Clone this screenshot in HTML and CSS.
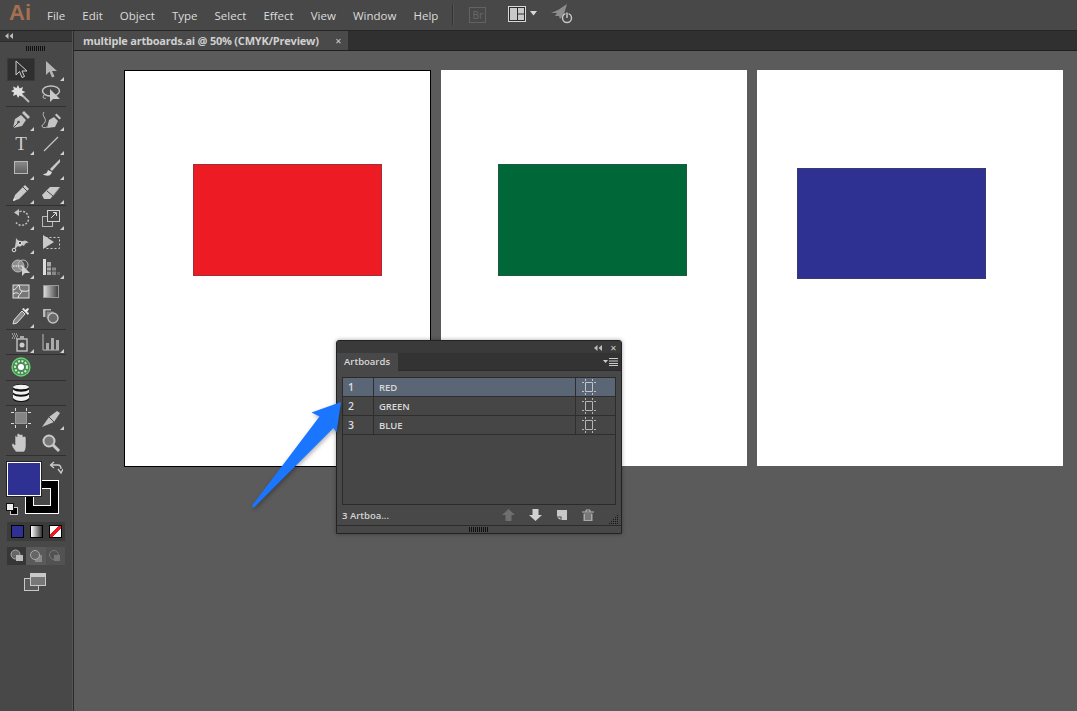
FILE: index.html
```html
<!DOCTYPE html>
<html lang="en">
<head>
<meta charset="utf-8">
<title>multiple artboards.ai</title>
<link rel="stylesheet" href="styles.css">
</head>
<body>
<div class="app">
  <header class="menubar">
    <span class="logo">Ai</span>
    <nav class="menus"><span>File</span><span>Edit</span><span>Object</span><span>Type</span><span>Select</span><span>Effect</span><span>View</span><span>Window</span><span>Help</span></nav>
    <span class="vsep"></span>
    <span class="bridge">Br</span>
    <svg class="layout-ic" width="30" height="18" viewBox="0 0 30 18"><rect x="0.5" y="0.5" width="17" height="15" fill="#2c2c2c" stroke="#d8d8d8"/><rect x="2" y="2" width="7" height="12" fill="#c9c9c9"/><rect x="10" y="2" width="6" height="5.500" fill="#c9c9c9"/><rect x="10" y="8.500" width="6" height="5.500" fill="#c9c9c9"/><path d="M22 5h7l-3.500 4.500z" fill="#d8d8d8"/></svg>
    <svg class="sync-ic" width="24" height="22" viewBox="0 0 24 22"><path d="M0 9 7 6 16 0 13 10 9 15 8 12 4 12 6 9z" fill="#8c8c8c"/><circle cx="16" cy="14" r="4.500" fill="none" stroke="#c4c4c4" stroke-width="1.500"/><path d="M16 8v6" stroke="#474747" stroke-width="3"/><path d="M16 8.500v5.500" stroke="#c4c4c4" stroke-width="1.500"/></svg>
  </header>
  <div class="main">
    <aside class="toolbar">
      <div class="collapse-strip"><svg width="8" height="6" viewBox="0 0 8 6"><path d="M3.500 0v6L0 3zM8 0v6L4.500 3z" fill="#bdbdbd"/></svg></div>
      <div class="grip"></div>

      <div class="tool-group">
        <div class="tool selected"><svg class="ic" viewBox="0 0 20 20"><path d="M5 2v14l3.500-3.500 2.500 6 2.500-1-2.500-5.500h5z" fill="#333" stroke="#cfcfcf"/></svg></div>
        <div class="tool more"><svg class="ic" viewBox="0 0 20 20"><path d="M5 2v14l3.500-3.500 2.500 6 2.500-1-2.500-5.500h5z" fill="#b5b5b5"/></svg></div>
        <div class="tool"><svg class="ic" viewBox="0 0 20 20"><path d="M10 10l8 8" stroke="#bbb" stroke-width="2"/><path d="M7 1l1.500 3.500L12 3l-1 3.500 3.500 1.500-3.500 1.500 1 3.500-3.500-1.500L7 14l-1.500-3.500L2 12l1-3.500L0 7l3-1.500L2 2.500l3.500 1.500z" fill="#e0e0e0"/></svg></div>
        <div class="tool"><svg class="ic" viewBox="0 0 20 20"><ellipse cx="10" cy="7" rx="8.500" ry="5" fill="none" stroke="#c4c4c4" stroke-width="1.500"/><path d="M3 11c-2 3 0 4 2 3" fill="none" stroke="#c4c4c4"/><path d="M9 5v13l3-3h7z" fill="#c9c9c9"/></svg></div>
      </div>
      <div class="tool-sep"></div>

      <div class="tool-group">
        <div class="tool more"><svg class="ic" viewBox="0 0 20 20"><path d="M2 19l2-9 6-4 5 5-4 6z" fill="#c4c4c4"/><path d="M2 19l5-5" stroke="#474747"/><circle cx="7.500" cy="13" r="1.300" fill="#474747"/><path d="M11 4l2-2 6 6-2 2z" fill="#c4c4c4"/></svg></div>
        <div class="tool more"><svg class="ic" viewBox="0 0 20 20"><path d="M6 19l2-8 5-3 4 4-3 6z" fill="#c4c4c4"/><path d="M14 6l1.500-1.500 4.500 4.500-1.500 1.500z" fill="#c4c4c4"/><path d="M3 3c-3 4 3 6 1 10-1 3-3 2-3 4s3 2 5 1" fill="none" stroke="#bbb"/></svg></div>
        <div class="tool more"><span class="t-glyph">T</span></div>
        <div class="tool more"><svg class="ic" viewBox="0 0 20 20"><path d="M3 17 17 3" stroke="#c4c4c4" stroke-width="1.200"/></svg></div>
        <div class="tool more"><svg class="ic" viewBox="0 0 20 20"><defs><linearGradient id="rg" x1="0" y1="0" x2="0" y2="1"><stop offset="0" stop-color="#8a8a8a"/><stop offset="1" stop-color="#5f5f5f"/></linearGradient></defs><rect x="3.500" y="3.500" width="13" height="12" fill="url(#rg)" stroke="#b8b8b8"/></svg></div>
        <div class="tool more"><svg class="ic" viewBox="0 0 20 20"><path d="M19 1 9 11l2 2 8-9z" fill="#c9c9c9"/><path d="M2 16c3 0 4-1 5-4l4 2c-1 3-3 5-8 3z" fill="#d8d8d8"/></svg></div>
        <div class="tool more"><svg class="ic" viewBox="0 0 20 20"><path d="M2 18l2-6L14 2l4 4L8 16z" fill="#c9c9c9"/><path d="M12 4l4 4" stroke="#474747"/><path d="M2 18l1-3 2 2z" fill="#eee"/></svg></div>
        <div class="tool more"><svg class="ic" viewBox="0 0 20 20"><path d="M1 12 9 4h10l-7 9-3 3H3z" fill="#c9c9c9"/><path d="M6 8l6 5v3" fill="none" stroke="#474747"/><path d="M12 13l7-9" stroke="#8a8a8a"/></svg></div>
      </div>
      <div class="tool-sep"></div>

      <div class="tool-group">
        <div class="tool more"><svg class="ic" viewBox="0 0 20 20"><path d="M5.500 5.500a7 7 0 1 1-.5 9" fill="none" stroke="#c4c4c4" stroke-width="1.400" stroke-dasharray="2 1.500"/><path d="M8 1v7L3 4.500z" fill="#c4c4c4"/></svg></div>
        <div class="tool more"><svg class="ic" viewBox="0 0 20 20"><rect x="1.500" y="8.500" width="10" height="10" fill="none" stroke="#b8b8b8"/><rect x="6.500" y="2.500" width="12" height="11" fill="#474747" stroke="#d0d0d0"/><path d="M10 10l5-5M12 4.500h3.500V8" fill="none" stroke="#ddd"/></svg></div>
        <div class="tool more"><svg class="ic" viewBox="0 0 20 20"><path d="M3 17c1-3 2-8 2-12 2 3 5 4 7 3 2-1 3-1 6 2-3-1-4 1-5 3l-2-1c-1 2-3 2-4 1z" fill="#c4c4c4"/><circle cx="3" cy="17" r="1.800" fill="#474747" stroke="#ddd"/><circle cx="9" cy="10" r="1.800" fill="#474747" stroke="#eee"/></svg></div>
        <div class="tool"><svg class="ic" viewBox="0 0 20 20"><rect x="4.500" y="4.500" width="14" height="11" fill="none" stroke="#ccc" stroke-dasharray="2 2"/><path d="M2 2l11 7-11 7z" fill="#c9c9c9"/></svg></div>
        <div class="tool more"><svg class="ic" viewBox="0 0 20 20"><ellipse cx="7" cy="9" rx="6" ry="6" fill="#8d8d8d" stroke="#bbb"/><circle cx="12" cy="8" r="5" fill="none" stroke="#bbb"/><path d="M2 9h9" stroke="#fff" stroke-dasharray="1.500 1"/><path d="M11 8v11l3-3h5z" fill="#d0d0d0"/></svg></div>
        <div class="tool more"><svg class="ic" viewBox="0 0 20 20"><path d="M2 2h3v16H2z" fill="#ddd"/><path d="M6 5h4v13H6z" fill="#aaa"/><path d="M11 10h4v8h-4z" fill="#888"/><path d="M16 15h3v3h-3z" fill="#666"/><path d="M6 10h9M6 14h13" stroke="#474747"/></svg></div>
        <div class="tool"><svg class="ic" viewBox="0 0 20 20"><rect x="2" y="3" width="16" height="13" fill="#777" stroke="#ddd"/><path d="M2 8c4-1 3-3 6-5M8 3c1 3 0 5 3 6 3 0 5 1 7-1M11 9c-1 3-3 3-4 7M2 12c3-2 5-1 6 0" fill="none" stroke="#eee"/></svg></div>
        <div class="tool"><svg class="ic" viewBox="0 0 20 20"><defs><linearGradient id="gg"><stop offset="0" stop-color="#e0e0e0"/><stop offset="1" stop-color="#3c3c3c"/></linearGradient></defs><rect x="2.500" y="3.500" width="15" height="12" fill="url(#gg)" stroke="#999"/></svg></div>
        <div class="tool more"><svg class="ic" viewBox="0 0 20 20"><path d="M11 5 3 14l-1 4 4-1 8-9z" fill="#888" stroke="#ddd"/><path d="M11 3l6 6 1-2-2-1 2-3-1-1-3 2-1-2z" fill="#eee"/></svg></div>
        <div class="tool"><svg class="ic" viewBox="0 0 20 20"><rect x="2" y="3" width="8" height="8" fill="#bbb"/><rect x="5" y="5" width="8" height="8" fill="#888" stroke="#474747"/><circle cx="12" cy="12" r="5" fill="#6a6a6a" stroke="#c4c4c4" stroke-width="1.400"/></svg></div>
      </div>
      <div class="tool-sep"></div>

      <div class="tool-group">
        <div class="tool more"><svg class="ic" viewBox="0 0 20 20"><rect x="6" y="7" width="10" height="12" fill="none" stroke="#ccc" stroke-width="1.300"/><circle cx="11" cy="13" r="2.500" fill="#ccc"/><rect x="9" y="4" width="4" height="3" fill="#aaa"/><path d="M1 2h6M2 4h5M1 6h5" stroke="#ddd" stroke-dasharray="1 1"/></svg></div>
        <div class="tool more"><svg class="ic" viewBox="0 0 20 20"><path d="M2 2v16h16" fill="none" stroke="#bbb"/><rect x="5" y="11" width="3" height="7" fill="#aaa"/><rect x="10" y="6" width="3" height="12" fill="#aaa"/><rect x="15" y="8" width="3" height="10" fill="#aaa"/></svg></div>
      </div>
      <div class="tool-sep"></div>

      <div class="tool-group">
        <div class="tool"><svg class="ic ic-big" viewBox="0 0 20 20"><circle cx="10" cy="10" r="9" fill="#4a8a55" stroke="#62d96f" stroke-width="1.300"/><circle cx="10" cy="10" r="6" fill="none" stroke="#d5e8d5" stroke-width="2" stroke-dasharray="2 1.500"/><circle cx="10" cy="10" r="3" fill="#fff"/></svg></div>
        <div></div>
      </div>
      <div class="tool-sep"></div>

      <div class="tool-group">
        <div class="tool"><svg class="ic ic-big" viewBox="0 0 20 20"><path d="M2 4c0-4 16-4 16 0v12c0 4-16 4-16 0z" fill="#111"/><path d="M2 4c0 3 16 3 16 0-1-3-15-3-16 0zM2 6.500c3 3 13 3 16 0v3c-3 3-13 3-16 0zM2 11.500c3 3 13 3 16 0v3.500c-3 4-13 4-16 0z" fill="#f2f2f2"/></svg></div>
        <div></div>
      </div>
      <div class="tool-sep"></div>

      <div class="tool-group">
        <div class="tool"><svg class="ic" viewBox="0 0 20 20"><rect x="4.500" y="4.500" width="11" height="11" fill="#858585" stroke="#999"/><path d="M4.500 0v3M15.500 0v3M4.500 17v3M15.500 17v3M0 4.500h3M0 15.500h3M17 4.500h3M17 15.500h3" stroke="#ddd"/></svg></div>
        <div class="tool more"><svg class="ic" viewBox="0 0 20 20"><path d="M1 19 8 9l8-6 3 2-6 9z" fill="#c4c4c4"/><path d="M8 9l5 5" stroke="#474747"/></svg></div>
        <div class="tool"><svg class="ic" viewBox="0 0 20 20"><path d="M5 19c-2-3-5-6-4-8 1-1 2 0 3 1V4c0-2 2-2 2 0V2c0-2 3-2 3 0v0c0-1 3-1 3 1v1c0-1 3-1 3 1v8c0 3-1 5-2 6z" fill="#c9c9c9" stroke="#3a3a3a" stroke-width=".5"/></svg></div>
        <div class="tool"><svg class="ic" viewBox="0 0 20 20"><circle cx="8" cy="8" r="5.500" fill="#777" stroke="#c9c9c9" stroke-width="2"/><path d="M12 12l6 6" stroke="#c9c9c9" stroke-width="3"/></svg></div>
      </div>
      <div class="tool-sep"></div>

      <div class="color-area">
        <div class="stroke-swatch"><div class="stroke-hole"></div></div>
        <div class="fill-swatch"></div>
        <svg class="swap" width="14" height="14" viewBox="0 0 14 14"><path d="M2 4h7c2 0 3 1 3 4M5 1 1.500 4 5 7M9 8l3 4 2-4" fill="none" stroke="#ccc" stroke-width="1.300"/></svg>
        <div class="default-colors"><i></i><b></b></div>
      </div>

      <div class="mode-row">
        <span class="mode-swatch mode-color"></span>
        <span class="mode-swatch mode-grad"></span>
        <span class="mode-swatch mode-none"></span>
      </div>

      <div class="draw-row">
        <span class="draw-cell on"><svg width="14" height="14" viewBox="0 0 14 14"><circle cx="5.500" cy="5.500" r="4.500" fill="#666" stroke="#aaa"/><rect x="6" y="6" width="7" height="6" fill="#bbb"/></svg></span>
        <span class="draw-cell"><svg width="14" height="14" viewBox="0 0 14 14"><rect x="6" y="6" width="7" height="7" fill="#888"/><circle cx="6" cy="6" r="4.500" fill="#666" stroke="#aaa"/></svg></span>
        <span class="draw-cell"><svg width="14" height="14" viewBox="0 0 14 14"><circle cx="6" cy="6" r="4.500" fill="none" stroke="#777"/><path d="M6 6h6v6H6z" fill="#777"/></svg></span>
      </div>

      <svg class="screen-mode" width="22" height="18" viewBox="0 0 22 18"><rect x="0.500" y="5.500" width="14" height="12" fill="#5a5a5a" stroke="#c8c8c8"/><rect x="6.500" y="0.500" width="15" height="12" fill="#777" stroke="#c8c8c8"/><rect x="7" y="1" width="14" height="3" fill="#c8c8c8"/></svg>
    </aside>

    <div class="doc">
      <div class="tabbar">
        <div class="doc-tab"><span class="doc-title">multiple artboards.ai @ 50% (CMYK/Preview)</span><span class="x">✕</span></div>
      </div>
      <main class="canvas">
        <div class="artboard ab1 active"><div class="shape red"></div></div>
        <div class="artboard ab2"><div class="shape green"></div></div>
        <div class="artboard ab3"><div class="shape blue"></div></div>

        <section class="panel">
          <div class="panel-top">
            <svg width="8" height="6" viewBox="0 0 8 6"><path d="M3.500 0v6L0 3zM8 0v6L4.500 3z" fill="#bdbdbd"/></svg>
            <span class="panel-x">✕</span>
          </div>
          <div class="panel-tabs">
            <span class="panel-tab">Artboards</span>
            <svg class="panel-menu" width="15" height="8" viewBox="0 0 15 8"><path d="M0 2h5L2.500 5z" fill="#ccc"/><path d="M6 .5h9M6 3h9M6 5.500h9M6 7.500h9" stroke="#ccc"/></svg>
          </div>
          <div class="panel-body">
            <div class="ab-list">
              <div class="ab-row current"><span class="ab-num">1</span><span class="ab-name">RED</span><span class="ab-ic"><svg width="14" height="16" viewBox="0 0 14 16"><path d="M3.500 3.500h7v9h-7zM3.500 0v2M10.500 0v2M3.500 14v2M10.500 14v2M0 3.500h2M12 3.500h2M0 12.500h2M12 12.500h2" fill="none" stroke="#c4c4c4"/></svg></span></div>
              <div class="ab-row"><span class="ab-num">2</span><span class="ab-name">GREEN</span><span class="ab-ic"><svg width="14" height="16" viewBox="0 0 14 16"><path d="M3.500 3.500h7v9h-7zM3.500 0v2M10.500 0v2M3.500 14v2M10.500 14v2M0 3.500h2M12 3.500h2M0 12.500h2M12 12.500h2" fill="none" stroke="#b4b4b4"/></svg></span></div>
              <div class="ab-row"><span class="ab-num">3</span><span class="ab-name">BLUE</span><span class="ab-ic"><svg width="14" height="16" viewBox="0 0 14 16"><path d="M3.500 3.500h7v9h-7zM3.500 0v2M10.500 0v2M3.500 14v2M10.500 14v2M0 3.500h2M12 3.500h2M0 12.500h2M12 12.500h2" fill="none" stroke="#b4b4b4"/></svg></span></div>
            </div>
            <div class="panel-foot">
              <span class="foot-label">3 Artboa...</span>
              <div class="foot-icons">
                <svg width="13" height="12" viewBox="0 0 13 12"><path d="M6.500 0 13 6H9.500v6h-6V6H0z" fill="#6f6f6f"/></svg>
                <svg width="13" height="12" viewBox="0 0 13 12"><path d="M6.500 12 13 6H9.500V0h-6v6H0z" fill="#d2d2d2"/></svg>
                <svg width="12" height="12" viewBox="0 0 12 12"><path d="M1 1h10v10H5.500V7.500H1z" fill="#c8c8c8"/><path d="M1 8.500h3.500V11z" fill="#c8c8c8"/></svg>
                <svg width="12" height="12" viewBox="0 0 12 12"><path d="M0 3h12M4 3V1h4v2" fill="none" stroke="#bbb"/><path d="M1.500 4.500h9V12h-9z" fill="#a8a8a8"/><path d="M4 5v6M6 5v6M8 5v6" stroke="#484848"/></svg>
              </div>
              <svg class="resize-grip" width="11" height="11" viewBox="0 0 11 11"><path d="M9 1h1v1H9zM7 3h1v1H7zM9 3h1v1H9zM5 5h1v1H5zM7 5h1v1H7zM9 5h1v1H9zM3 7h1v1H3zM5 7h1v1H5zM7 7h1v1H7zM9 7h1v1H9zM1 9h1v1H1zM3 9h1v1H3zM5 9h1v1H5zM7 9h1v1H7zM9 9h1v1H9z" fill="#161616"/></svg>
            </div>
          </div>
          <div class="panel-bottom"><span class="grip dark"></span></div>
        </section>

        <svg class="callout" width="100" height="115" viewBox="0 0 100 115"><path d="M99 1 69.500 11.500 77.500 15.500 10.500 104c-1 2 0 3 2 2L91.500 27 94.500 31.500z" fill="#1a76ff"/></svg>
      </main>
    </div>
  </div>
</div>
</body>
</html>
```
FILE: styles.css
```css
* { box-sizing: border-box; }
html, body { margin: 0; height: 100%; overflow: hidden; }
body { background: #5b5b5b; font-family: "Open Sans", "Liberation Sans", sans-serif; color: #d6d6d6; }
.app { width: 1077px; height: 711px; display: flex; flex-direction: column; }

/* Application bar */
.menubar { height: 31px; flex: none; display: flex; align-items: center; background: #484848; border-bottom: 1px solid #262626; }
.logo { margin-left: 9px; width: 38px; font: bold 22px "Liberation Sans", sans-serif; color: #a5704f; position: relative; top: -2px; }
.menus { display: flex; gap: 17.100px; font-size: 11.500px; color: #dcdcdc; }
.vsep { width: 1px; height: 20px; background: #333; margin-left: 14px; border-right: 1px solid #555; box-sizing: content-box; }
.bridge { width: 17px; height: 16px; margin-left: 15px; border: 1px solid #626262; color: #6a6a6a; font-size: 10px; line-height: 14px; text-align: center; }
.layout-ic { margin-left: 22px; margin-top: -1px; }
.sync-ic { margin-left: 13px; }
.main { flex: 1; display: flex; min-height: 0; }

/* Tools */
.toolbar { width: 74px; flex: none; background: #484848; border-right: 1px solid #2a2a2a; box-shadow: inset -1px 0 0 #555; display: flex; flex-direction: column; align-items: flex-start; }
.collapse-strip { width: 72px; height: 11px; background: #383838; border-bottom: 1px solid #2c2c2c; padding: 2px 0 0 5px; line-height: 0; }
.toolbar > .grip { margin: 4px 0 0 26px; }
.grip { display: block; width: 20px; height: 5px; background: repeating-linear-gradient(90deg, #111 0 1px, transparent 1px 2px); }
.grip.dark { margin: 0 auto; }
.tool-group { margin: 6px 0 0 6px; display: grid; grid-template-columns: 30px 30px; grid-auto-rows: 24.500px; }
.tool-group ~ .tool-group { margin-top: 0; }
.tool { position: relative; display: flex; align-items: center; justify-content: center; }
.tool.selected { margin: 1px; background: #2f2f2f; box-shadow: inset 0 0 0 1px #3a3a3a; }
.tool.more::after { content: ""; position: absolute; right: 2px; bottom: 1px; border-style: solid; border-width: 0 0 4px 4px; border-color: transparent transparent #cfcfcf transparent; }
.ic { width: 20px; height: 20px; display: block; }
.ic-big { width: 20px; height: 20px; }
.t-glyph { font: 19px "Liberation Serif", serif; color: #cfcfcf; }
.tool-sep { width: 60px; height: 1px; margin-left: 6px; background: #303030; flex: none; }

/* Colour controls */
.color-area { position: relative; width: 60px; height: 58px; margin: 6px 0 0 6px; flex: none; }
.fill-swatch { position: absolute; left: 1px; top: 0; width: 34px; height: 34px; background: #2e3192; border: 1px solid #fff; box-shadow: 0 0 0 1px #222; }
.stroke-swatch { position: absolute; left: 19px; top: 18px; width: 34px; height: 34px; background: #000; border: 1px solid #fff; }
.stroke-hole { position: absolute; left: 7px; top: 7px; width: 18px; height: 18px; background: #484848; border: 1px solid #fff; }
.swap { position: absolute; left: 43px; top: -1px; }
.default-colors { position: absolute; left: 0; top: 41px; width: 12px; height: 12px; }
.default-colors i { position: absolute; right: 0; bottom: 0; width: 8px; height: 8px; background: #000; border: 1px solid #ccc; }
.default-colors b { position: absolute; left: 0; top: 0; width: 8px; height: 8px; background: #eee; border: 1px solid #111; }
.mode-row { width: 58px; height: 19px; margin: 2px 0 0 7px; background: #3b3b3b; display: flex; justify-content: space-between; align-items: center; padding: 0 3px 0 4px; flex: none; }
.mode-swatch { width: 13px; height: 13px; border: 1px solid #000; }
.mode-color { background: #2e3192; }
.mode-grad { background: linear-gradient(90deg, #fff, #333); }
.mode-none { background: linear-gradient(135deg, #fff 38%, #e81c24 38% 62%, #fff 62%); }
.draw-row { width: 58px; height: 18px; margin: 6px 0 0 7px; display: flex; background: #5a5a5a; flex: none; }
.draw-cell { flex: 1; display: flex; align-items: center; justify-content: center; }
.draw-cell.on { background: #363636; }
.draw-cell + .draw-cell + .draw-cell { background: #525252; }
.screen-mode { margin: 8px 0 0 24px; flex: none; }

/* Document */
.doc { flex: 1; display: flex; flex-direction: column; min-width: 0; }
.tabbar { height: 20px; flex: none; background: #303030; border-bottom: 1px solid #1f1f1f; }
.doc-tab { width: 274px; height: 19px; background: #4a4a4a; display: flex; align-items: center; justify-content: space-between; padding: 0 6px 0 9px; }
.doc-title { font-size: 11px; font-weight: 700; letter-spacing: -0.220px; color: #d0d0d0; white-space: nowrap; }
.x { font-size: 8px; color: #d0d0d0; }
.canvas { position: relative; flex: 1; background: #5b5b5b; }
.artboard { position: absolute; top: 19px; height: 396px; width: 306px; background: #fff; }
.ab1 { left: 50px; width: 307px; height: 397px; border: 1px solid #000; }
.ab2 { left: 367px; }
.ab3 { left: 683px; }
.shape { position: absolute; width: 189px; height: 112px; border: 1px solid rgba(70, 70, 70, .45); }
.red { left: 68px; top: 93px; background: #ed1c24; }
.green { left: 57px; top: 94px; background: #006838; }
.blue { left: 40px; top: 98px; background: #2e3192; height: 111px; }

/* Artboards panel */
.panel { position: absolute; left: 262px; top: 289px; width: 286px; height: 194px; background: #484848; border: 1px solid #222; border-radius: 3px 3px 0 0; box-shadow: 0 0 4px rgba(0, 0, 0, .35); display: flex; flex-direction: column; }
.panel-top { height: 12px; flex: none; background: #3a3a3a; display: flex; justify-content: flex-end; align-items: center; gap: 8px; padding: 1px 4px 0 0; }
.panel-x { font-size: 8px; color: #d0d0d0; line-height: 1; }
.panel-tabs { height: 18px; flex: none; background: #333; border-bottom: 1px solid #2a2a2a; display: flex; justify-content: space-between; align-items: center; padding-right: 3px; }
.panel-tab { width: 61px; height: 18px; background: #484848; padding-left: 7px; font-size: 9.500px; font-weight: 600; line-height: 18px; color: #d8d8d8; }
.panel-body { flex: 1; padding: 6px 5px 0 5px; display: flex; flex-direction: column; min-height: 0; }
.ab-list { height: 128px; background: #464646; border: 1px solid #2b2b2b; flex: none; }
.ab-row { display: flex; height: 19px; border-bottom: 1px solid #2e2e2e; }
.ab-row.current { background: #5a6576; }
.ab-num { width: 31px; border-right: 1px solid #2e2e2e; padding-left: 5px; font-size: 10.500px; font-weight: 600; line-height: 18px; color: #dcdcdc; }
.ab-name { flex: 1; padding-left: 5px; font-size: 9.500px; font-weight: 600; letter-spacing: -0.100px; line-height: 19px; color: #d8d8d8; }
.ab-ic { width: 40px; border-left: 1px solid #2e2e2e; padding-left: 6px; line-height: 0; padding-top: 1px; }
.panel-foot { flex: 1; display: flex; align-items: center; position: relative; }
.foot-label { font-size: 9.500px; font-weight: 600; color: #d4d4d4; }
.foot-icons { display: flex; margin-left: auto; margin-right: 22px; gap: 14px; }
.resize-grip { position: absolute; right: -3px; bottom: 0; }
.panel-bottom { height: 8px; flex: none; border-top: 1px solid #2b2b2b; background: #484848; padding-top: 1px; }
.panel-bottom .grip { height: 5px; }
.callout { position: absolute; left: 168px; top: 350px; filter: drop-shadow(1px 2px 2px rgba(0, 0, 0, .3)); }
```
